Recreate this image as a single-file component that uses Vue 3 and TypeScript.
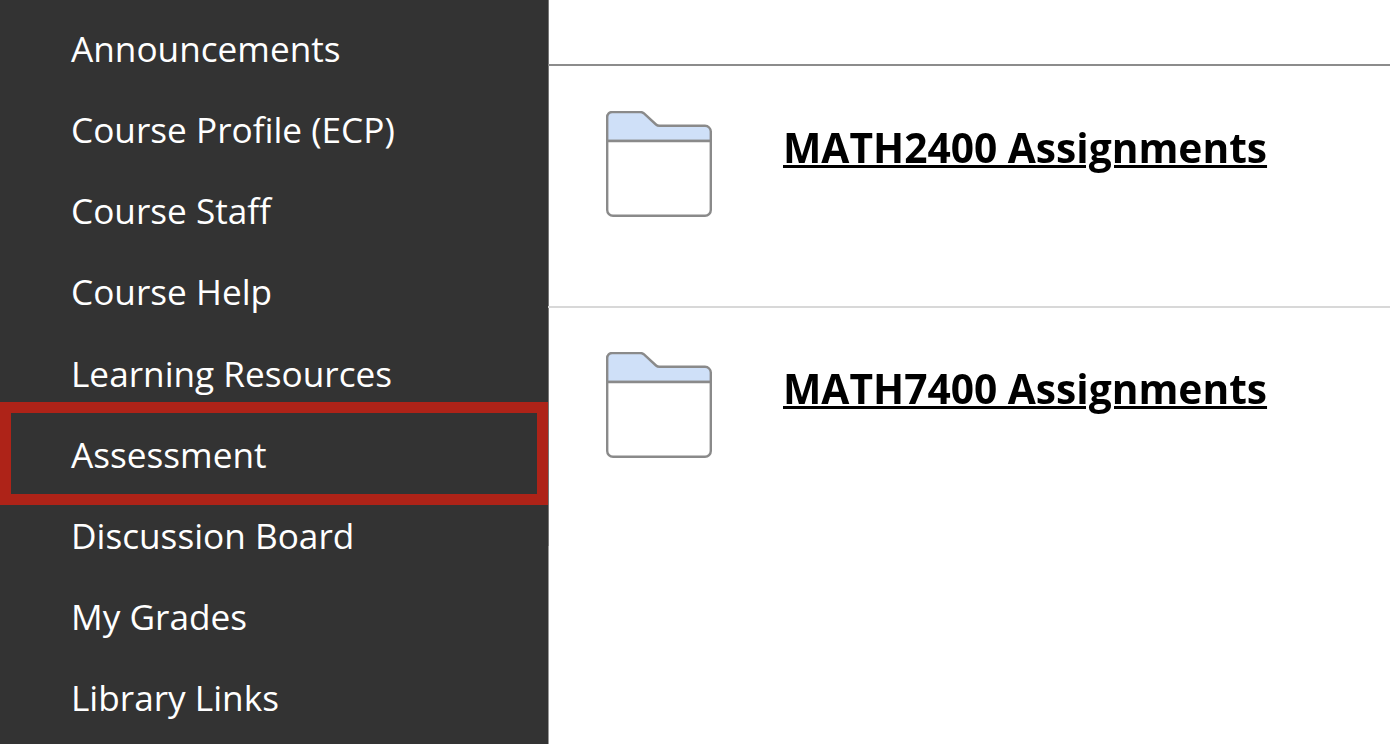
<script setup lang="ts">
const items: string[] = ['Announcements','Course Profile (ECP)','Course Staff','Course Help','Learning Resources','Assessment','Discussion Board','My Grades','Library Links']
const folders: string[] = ['MATH2400 Assignments','MATH7400 Assignments']
</script>
<template>
  <div class="page">
    <nav class="side">
      <a v-for="i in items" :key="i" class="item" :class="{ sel: i === 'Assessment' }">{{ i }}</a>
    </nav>
    <main class="main">
      <div v-for="f in folders" :key="f" class="row">
        <svg class="ic" width="106" height="106" viewBox="0 0 106 106">
          <path d="M1.200 30V6a5 5 0 0 1 5-5h28c1.500 0 2.500.4 3.500 1.200L50 13.500c1 .9 2 1.300 3.500 1.300H99a5.800 5.800 0 0 1 5.800 5.800V30Z" fill="#cfe0f8" stroke="#8a8a8a" stroke-width="2.400" stroke-linejoin="round"/>
          <path d="M1.200 30h103.600v69a5.800 5.800 0 0 1-5.800 5.800H7A5.800 5.800 0 0 1 1.200 99Z" fill="#fff" stroke="#8a8a8a" stroke-width="2.400" stroke-linejoin="round"/>
        </svg>
        <a class="link">{{ f }}</a>
      </div>
    </main>
  </div>
</template>
<style>
html, body { margin: 0; background: #fff; overflow: hidden; }
</style>
<style scoped>
.page { display: flex; width: 1390px; height: 744px; font-family: "Open Sans", sans-serif; filter: blur(0.45px); }
.side { width: 549px; height: 744px; background: #333; border-right: 1px solid #777; box-sizing: border-box; padding-top: 7.500px; flex: none; position: relative; }
.side::after { content: ""; position: absolute; left: 100%; top: 546px; bottom: 0; width: 1px; background: #999; }
.item { display: flex; align-items: center; height: 81.150px; padding-left: 71px; box-sizing: border-box; color: #fff; font-size: 35.200px; position: relative; }
.sel::after { content: ""; position: absolute; left: 0; right: 0; top: -11.250px; bottom: -10.600px; border: 11px solid #ae2318; }
.main { flex: 1; margin-top: 64px; margin-left: -1px; border-top: 2px solid #8c8c8c; position: relative; }
.row { height: 241px; display: flex; padding: 45px 0 0 58px; gap: 71px; border-bottom: 1px solid #d8d8d8; box-shadow: 0 1px 0 #d8d8d8; box-sizing: border-box; }
.row:last-child { border-bottom: 0; box-shadow: none; }
.ic { flex: none; }
.link { color: #000; font-size: 40.700px; font-weight: 700; text-decoration: underline; text-decoration-thickness: 3px; line-height: 78px; height: 78px; margin-top: -3px; }
</style>
